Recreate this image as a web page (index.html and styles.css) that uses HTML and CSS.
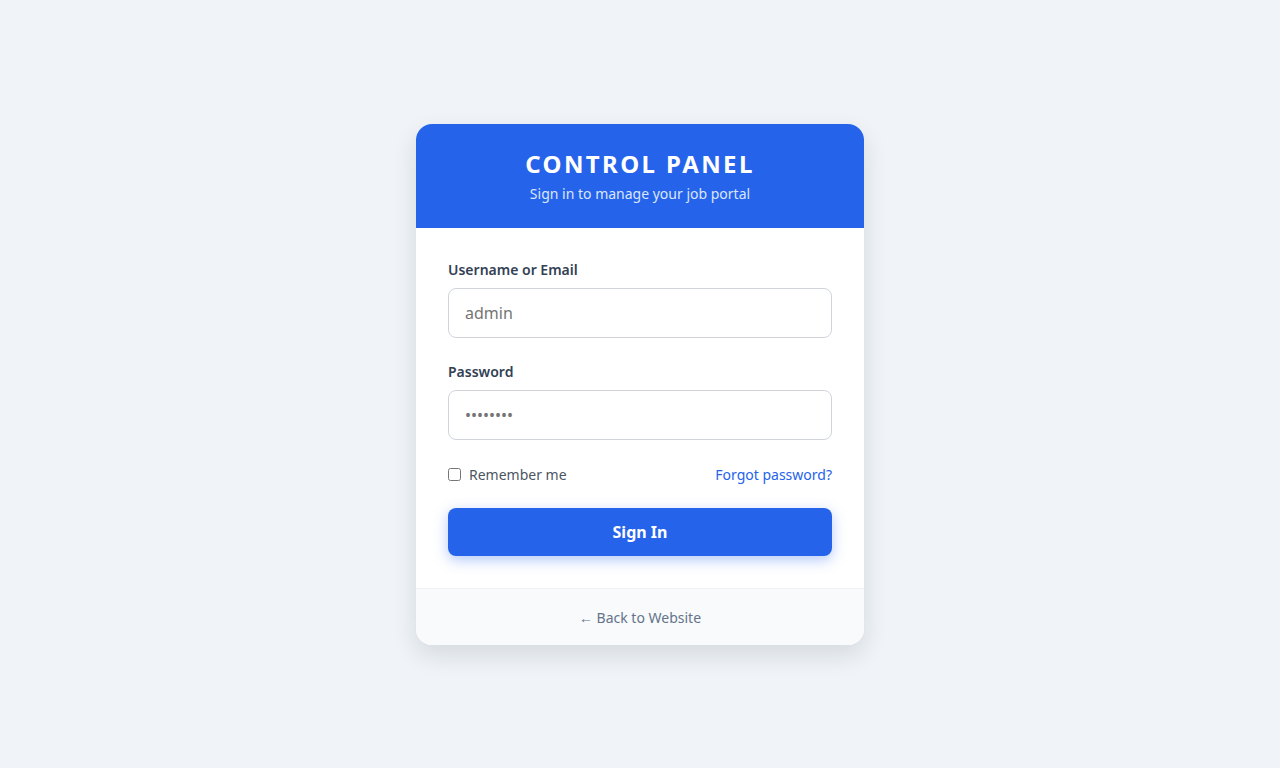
FILE: index.html
```html
<!DOCTYPE html>
<html lang="en">
<head>
<meta charset="utf-8">
<title>Control Panel Login</title>
<link rel="stylesheet" href="styles.css">
</head>
<body>
<main class="page">
  <div class="card">
    <div class="card-header">
      <h1 class="title">CONTROL PANEL</h1>
      <p class="subtitle">Sign in to manage your job portal</p>
    </div>
    <form class="card-body">
      <div class="field">
        <label class="label" for="user">Username or Email</label>
        <input class="input" id="user" type="text" placeholder="admin">
      </div>
      <div class="field">
        <label class="label" for="pass">Password</label>
        <input class="input" id="pass" type="password" placeholder="••••••••">
      </div>
      <div class="options">
        <label class="remember"><input type="checkbox" class="check"> Remember me</label>
        <a class="forgot" href="#">Forgot password?</a>
      </div>
      <button class="btn" type="button">Sign In</button>
    </form>
    <div class="card-footer">
      <a class="back" href="#">← Back to Website</a>
    </div>
  </div>
</main>
</body>
</html>
```

FILE: styles.css
```css
* { box-sizing: border-box; }
html, body { margin: 0; padding: 0; }
body {
  background: #f0f4f8;
  font-family: "Noto Sans", "Open Sans", sans-serif;
  color: #334155;
}
.page {
  display: flex;
  justify-content: center;
  padding-top: 124px;
  min-height: 768px;
}
.card {
  width: 448px;
  height: 521px;
  background: #ffffff;
  border-radius: 16px;
  box-shadow: 0 10px 25px rgba(15, 23, 42, 0.12);
  overflow: hidden;
  display: flex;
  flex-direction: column;
}
.card-header {
  background: #2563eb;
  color: #ffffff;
  text-align: center;
  padding: 24px 32px;
  height: 104px;
}
.title {
  margin: 0;
  font-size: 24px;
  line-height: 31px;
  font-weight: 700;
  letter-spacing: 2.4px;
}
.subtitle {
  margin: 4px 0 0;
  font-size: 14px;
  line-height: 21px;
  color: #dbe6fd;
}
.card-body {
  padding: 32px 32px 32px;
  display: flex;
  flex-direction: column;
  margin: 0;
}
.field {
  display: flex;
  flex-direction: column;
  gap: 8px;
  margin-bottom: 24px;
}
.label {
  font-size: 14px;
  line-height: 20px;
  font-weight: 600;
  color: #334155;
}
.input {
  height: 50px;
  border: 1px solid #d1d5db;
  border-radius: 8px;
  padding: 0 16px;
  font-family: inherit;
  font-size: 16px;
  color: #1f2937;
  background: #fff;
  outline: none;
}
.input::placeholder { color: #757575; }
.options {
  display: flex;
  align-items: center;
  justify-content: space-between;
  height: 20px;
  margin-bottom: 24px;
  font-size: 14px;
}
.remember {
  display: flex;
  align-items: center;
  gap: 8px;
  color: #4b5563;
}
.check {
  margin: 0;
  width: 13px;
  height: 13px;
}
.forgot {
  color: #2563eb;
  text-decoration: none;
}
.btn {
  height: 48px;
  border: none;
  border-radius: 8px;
  background: #2563eb;
  color: #fff;
  font-family: inherit;
  font-size: 16px;
  font-weight: 700;
  box-shadow: 0 4px 14px rgba(37, 99, 235, 0.35);
}
.card-footer {
  border-top: 1px solid #eef1f5;
  background: #f8fafc;
  text-align: center;
  flex: 1;
  display: flex;
  align-items: center;
  justify-content: center;
}
.back {
  color: #64748b;
  font-size: 14px;
  text-decoration: none;
}
```
